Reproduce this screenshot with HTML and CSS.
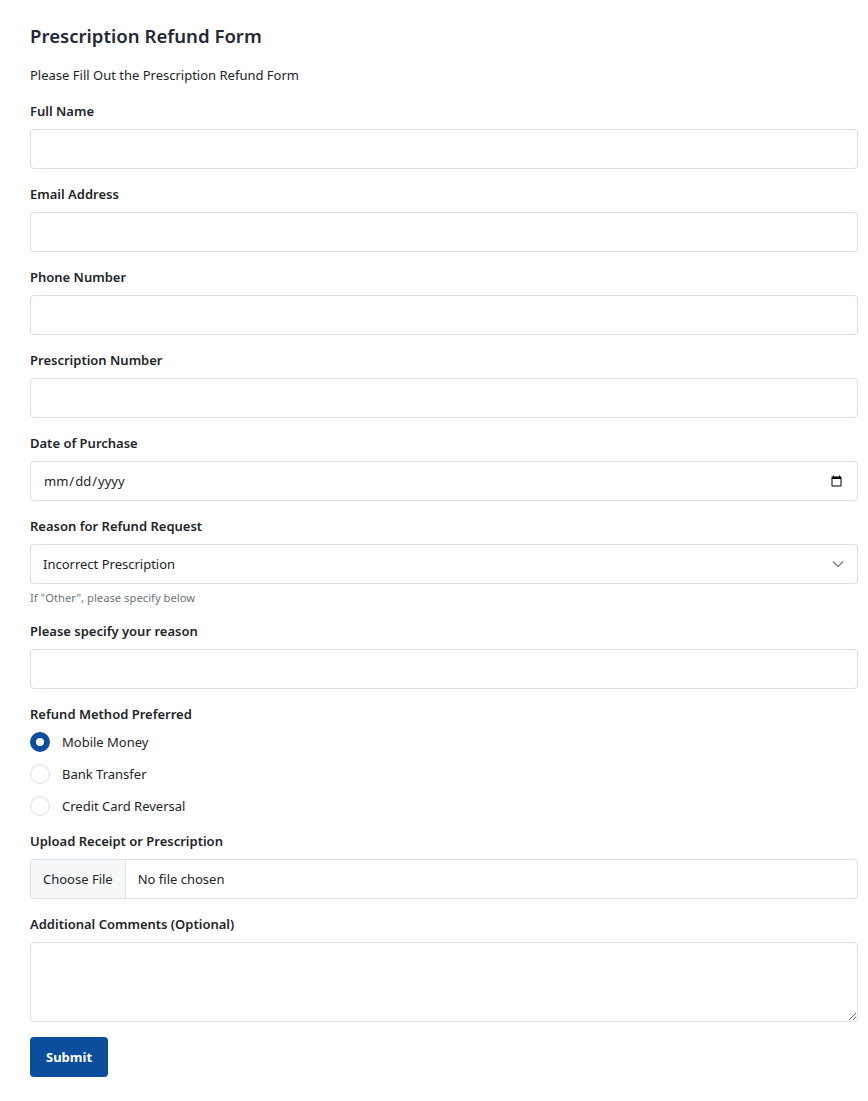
FILE: index.html
```html
<!DOCTYPE html>
<html lang="en">
<head>
<meta charset="utf-8">
<title>Prescription Refund Form</title>
<link rel="stylesheet" href="styles.css">
</head>
<body>
<main class="page">
  <h1 class="title">Prescription Refund Form</h1>
  <p class="intro">Please Fill Out the Prescription Refund Form</p>
  <form class="form">
    <div class="group first">
      <label class="label" for="name">Full Name</label>
      <input class="control" id="name" type="text">
    </div>
    <div class="group">
      <label class="label" for="email">Email Address</label>
      <input class="control" id="email" type="email">
    </div>
    <div class="group">
      <label class="label" for="phone">Phone Number</label>
      <input class="control" id="phone" type="tel">
    </div>
    <div class="group">
      <label class="label" for="rx">Prescription Number</label>
      <input class="control" id="rx" type="text">
    </div>
    <div class="group">
      <label class="label" for="date">Date of Purchase</label>
      <input class="control" id="date" type="date">
    </div>
    <div class="group">
      <label class="label" for="reason">Reason for Refund Request</label>
      <div class="select-wrap">
        <select class="control select" id="reason">
          <option>Incorrect Prescription</option>
          <option>Damaged Product</option>
          <option>Other</option>
        </select>
        <svg class="chevron" width="12" height="8" viewBox="0 0 12 8"><path d="M1 1.5l5 5 5-5" fill="none" stroke="#6b7280" stroke-width="1.2"/></svg>
      </div>
      <div class="help">If "Other", please specify below</div>
    </div>
    <div class="group">
      <label class="label" for="other">Please specify your reason</label>
      <input class="control" id="other" type="text">
    </div>
    <div class="group">
      <div class="label">Refund Method Preferred</div>
      <div class="radios">
        <label class="radio"><input type="radio" name="method" checked><span>Mobile Money</span></label>
        <label class="radio"><input type="radio" name="method"><span>Bank Transfer</span></label>
        <label class="radio"><input type="radio" name="method"><span>Credit Card Reversal</span></label>
      </div>
    </div>
    <div class="group">
      <label class="label" for="file">Upload Receipt or Prescription</label>
      <input class="control file" id="file" type="file">
    </div>
    <div class="group">
      <label class="label" for="comments">Additional Comments (Optional)</label>
      <textarea class="control textarea" id="comments"></textarea>
    </div>
    <button class="submit" type="button">Submit</button>
  </form>
</main>
</body>
</html>
```
FILE: styles.css
```css
* { box-sizing: border-box; }
html, body { margin: 0; background: #fff; }
body {
  font-family: "Noto Sans", "Open Sans", sans-serif;
  font-size: 13px;
  color: #212529;
}
.page { padding: 22px 10px 24px 30px; }
.title {
  margin: 0;
  font-size: 18.6px;
  line-height: 28px;
  font-weight: 600;
  color: #1f2937;
}
.intro {
  margin: 15px 0 0;
  font-size: 13px;
  line-height: 20px;
}
.form { display: flex; flex-direction: column; }
.group { margin-top: 16px; display: flex; flex-direction: column; }
.group.first { margin-top: 17px; }
.label {
  font-size: 13px;
  line-height: 19px;
  font-weight: 600;
  margin-bottom: 8px;
  color: #212529;
}
.control {
  display: block;
  width: 100%;
  height: 40px;
  margin: 0;
  padding: 0 12px;
  border: 1px solid #dcdfe3;
  border-radius: 4px;
  background: #fff;
  font-family: inherit;
  font-size: 13px;
  color: #212529;
  outline: none;
}
.select-wrap { position: relative; }
.select { appearance: none; -webkit-appearance: none; }
.chevron { position: absolute; right: 14px; top: 16px; pointer-events: none; }
.help {
  margin-top: 5px;
  font-size: 11.25px;
  line-height: 17px;
  color: #6c757d;
}
.radios { display: flex; flex-direction: column; gap: 12px; }
.radio {
  display: flex;
  align-items: center;
  gap: 12px;
  height: 20px;
  font-size: 13px;
}
.radio input {
  appearance: none;
  -webkit-appearance: none;
  margin: 0;
  width: 20px;
  height: 20px;
  border: 1px solid #dcdfe3;
  border-radius: 50%;
  background: #fff;
}
.radio input:checked {
  border: 6px solid #0b4f9c;
  background: #fff;
}
.file { padding: 0; line-height: 38px; }
.file::file-selector-button {
  height: 38px;
  margin: 0 12px 0 0;
  padding: 0 12px;
  border: none;
  border-right: 1px solid #dcdfe3;
  background: #f6f8fa;
  font-family: inherit;
  font-size: 13px;
  color: #212529;
}
.textarea { height: 80px; padding: 8px 12px; resize: vertical; }
.submit {
  align-self: flex-start;
  margin-top: 15px;
  height: 40px;
  padding: 0 16px;
  border: none;
  border-radius: 4px;
  background: #0b4f9c;
  color: #fff;
  font-family: inherit;
  font-size: 13px;
  font-weight: 700;
}
```
